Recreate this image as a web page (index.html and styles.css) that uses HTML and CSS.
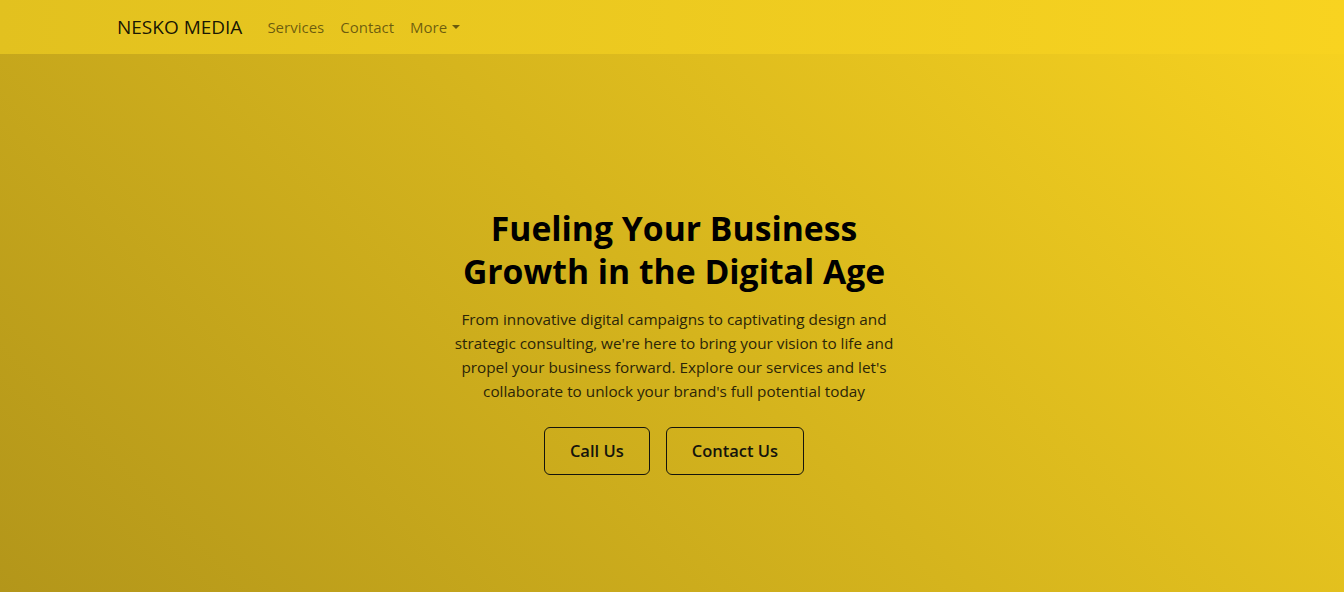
FILE: index.html
```html
<!DOCTYPE html>
<html lang="en">
<head>
<meta charset="utf-8">
<title>Nesko Media</title>
<link rel="stylesheet" href="styles.css">
</head>
<body>
<div class="page">
  <nav class="navbar">
    <div class="container nav-inner">
      <a class="brand" href="#">NESKO MEDIA</a>
      <ul class="nav-links">
        <li><a class="nav-link" href="#">Services</a></li>
        <li><a class="nav-link" href="#">Contact</a></li>
        <li><a class="nav-link dropdown-toggle" href="#">More</a></li>
      </ul>
    </div>
  </nav>
  <section class="hero">
    <div class="hero-content">
      <h1 class="hero-title">Fueling Your Business Growth in the Digital Age</h1>
      <p class="hero-text">From innovative digital campaigns to captivating design and strategic consulting, we're here to bring your vision to life and propel your business forward. Explore our services and let's collaborate to unlock your brand's full potential today</p>
      <div class="hero-actions">
        <a class="btn" href="#">Call Us</a>
        <a class="btn" href="#">Contact Us</a>
      </div>
    </div>
  </section>
</div>
</body>
</html>
```

FILE: styles.css
```css
* { box-sizing: border-box; }
html, body { margin: 0; padding: 0; height: 100%; }
body {
  font-family: "Open Sans", "Noto Sans", "Liberation Sans", sans-serif;
  color: #212529;
  overflow: hidden;
}
.page {
  min-height: 100vh;
  background: linear-gradient(45deg, #b3961a 0%, #f8d320 100%);
}
.navbar {
  height: 54px;
  display: flex;
  align-items: center;
  background: linear-gradient(90deg, #e2c11f 0%, #f8d320 100%);
}
.container {
  width: 1140px;
  margin: 0 auto;
  padding: 0 12px 0 15px;
}
.nav-inner {
  display: flex;
  align-items: center;
}
.brand {
  font-size: 19px;
  line-height: 30px;
  padding: 5px 0;
  margin-right: 17px;
  color: rgba(0,0,0,0.9);
  text-decoration: none;
  white-space: nowrap;
}
.nav-links {
  display: flex;
  list-style: none;
  margin: 0;
  padding: 0;
}
.nav-link {
  display: block;
  padding: 8px;
  font-size: 15px;
  line-height: 24px;
  color: rgba(0,0,0,0.55);
  text-decoration: none;
}
.dropdown-toggle::after {
  content: "";
  display: inline-block;
  margin-left: 0.3em;
  vertical-align: 0.255em;
  border-top: 0.3em solid;
  border-right: 0.3em solid transparent;
  border-left: 0.3em solid transparent;
}
.hero {
  display: flex;
  justify-content: center;
  padding: 153px 0 0 4px;
}
.hero-content {
  width: 450px;
  text-align: center;
}
.hero-title {
  margin: 0 0 14px;
  font-size: 33.7px;
  line-height: 43px;
  font-weight: 700;
  color: #000;
}
.hero-text {
  margin: 0 0 24px;
  font-size: 15.3px;
  line-height: 24px;
  color: #2b2508;
}
.hero-actions {
  display: flex;
  justify-content: center;
  gap: 16px;
}
.btn {
  display: inline-block;
  padding: 9px 25px;
  font-size: 16.5px;
  font-weight: 600;
  line-height: 28px;
  color: #15140c;
  border: 1px solid #15140c;
  border-radius: 6px;
  text-decoration: none;
}
```
